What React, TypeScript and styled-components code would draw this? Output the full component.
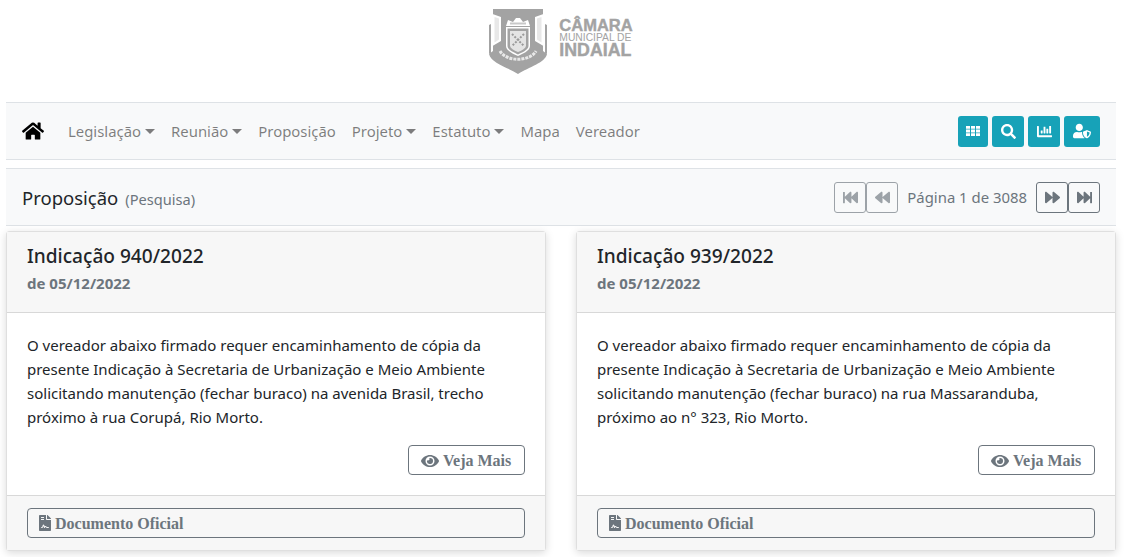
import * as React from 'react';
import styled, { createGlobalStyle } from 'styled-components';
import {
  FaBackward,
  FaChartBar,
  FaEye,
  FaFastBackward,
  FaFastForward,
  FaFileContract,
  FaForward,
  FaHome,
  FaSearch,
  FaUserShield,
} from 'react-icons/fa';

const GlobalStyle = createGlobalStyle`
  * { box-sizing: border-box; }
  html, body { margin: 0; background: #fff; }
  body {
    font-family: "Noto Sans", "Open Sans", sans-serif;
    font-size: 15px;
    color: #212529;
  }
`;

const Page = styled.div`
  width: 1124px;
  height: 557px;
  padding: 0 8px 0 6px;
  overflow: hidden;
`;

const Header = styled.header`
  height: 102px;
  padding-top: 9px;
  display: flex;
  justify-content: center;
  align-items: flex-start;
  gap: 12px;
`;

const LogoText = styled.div`
  display: flex;
  flex-direction: column;
  align-items: flex-start;
  padding-top: 10px;
  color: #a3a3a3;
  font-family: "Liberation Sans", sans-serif;
`;

const LogoLine = styled.span<{ $size: number; $bold?: boolean }>`
  font-size: ${({ $size }) => $size}px;
  font-weight: ${({ $bold }) => ($bold ? 700 : 400)};
  line-height: ${({ $size }) => Math.round($size * 0.8)}px;
  margin-bottom: 1.5px;
  white-space: nowrap;
  -webkit-text-stroke: ${({ $bold }) => ($bold ? '0.4px #a3a3a3' : '0')};
`;

const NavBar = styled.nav`
  height: 58px;
  display: flex;
  align-items: center;
  padding: 0 16px;
  background: #f8f9fa;
  border-top: 1px solid #dee2e6;
  border-bottom: 1px solid #dee2e6;
`;

const HomeLink = styled.a`
  display: flex;
  color: #000;
  font-size: 22px;
  margin-right: 16px;
`;

const NavLink = styled.a`
  display: flex;
  align-items: center;
  padding: 0 8px;
  color: rgba(0, 0, 0, 0.5);
  font-size: 14.9px;
  white-space: nowrap;
`;

const Caret = styled.span`
  width: 0;
  height: 0;
  margin-left: 4px;
  border-top: 5px solid rgba(0, 0, 0, 0.5);
  border-left: 5px solid transparent;
  border-right: 5px solid transparent;
`;

const NavActions = styled.div`
  margin-left: auto;
  display: flex;
  gap: 4px;
`;

const ActionButton = styled.button<{ $width: number; $icon: number }>`
  width: ${({ $width }) => $width}px;
  height: 31px;
  padding: 0;
  display: flex;
  align-items: center;
  justify-content: center;
  border: 0;
  border-radius: 3px;
  background: #17a2b8;
  color: #fff;
  font-size: ${({ $icon }) => $icon}px;
`;

const TitleBar = styled.div`
  height: 58px;
  margin-top: 8px;
  display: flex;
  align-items: center;
  padding: 0 16px;
  background: #f8f9fa;
  border-top: 1px solid #dee2e6;
  border-bottom: 1px solid #dee2e6;
`;

const Title = styled.h1`
  margin: 0;
  font-size: 18.5px;
  font-weight: 400;
  color: #212529;
`;

const TitleNote = styled.small`
  margin-left: 7px;
  font-size: 14.6px;
  color: #6c757d;
`;

const Pager = styled.div`
  margin-left: auto;
  display: flex;
  align-items: center;
`;

const PageLabel = styled.span`
  margin: 0 9px;
  font-size: 14.9px;
  color: #6c757d;
`;

const PageButton = styled.button<{ $disabled?: boolean }>`
  width: 32px;
  height: 31px;
  padding: 0;
  display: flex;
  align-items: center;
  justify-content: center;
  background: transparent;
  border: 1px solid #6c757d;
  border-radius: 3px;
  color: #6c757d;
  font-size: 15px;
  opacity: ${({ $disabled }) => ($disabled ? 0.65 : 1)};
`;

const Cards = styled.div`
  margin-top: 5px;
  display: grid;
  grid-template-columns: 540px 540px;
  column-gap: 30px;
`;

const Card = styled.article`
  height: 320px;
  display: flex;
  flex-direction: column;
  border: 1px solid rgba(0, 0, 0, 0.125);
  border-radius: 4px;
  box-shadow: 0 2px 8px rgba(0, 0, 0, 0.15);
  background: #fff;
`;

const CardHead = styled.div`
  height: 81px;
  padding: 11px 20px 0;
  background: #f7f7f7;
  border-bottom: 1px solid rgba(0, 0, 0, 0.125);
`;

const CardTitle = styled.h2`
  margin: 0;
  font-size: 19.1px;
  line-height: 26px;
  font-weight: 500;
  color: #212529;
`;

const CardDate = styled.div`
  margin-top: 3px;
  font-size: 15px;
  line-height: 22px;
  font-weight: 700;
  color: #6c757d;
`;

const CardBody = styled.div`
  flex: 1;
  display: flex;
  flex-direction: column;
  padding: 20px 20px 0;
`;

const CardText = styled.p`
  margin: 0;
  font-size: 15px;
  line-height: 24px;
  height: 112px;
  color: #212529;
`;

const MoreButton = styled.a`
  align-self: flex-end;
  width: 117px;
  height: 30px;
  display: flex;
  align-items: center;
  gap: 4px;
  padding: 2px 0 0 12px;
  border: 1px solid #6c757d;
  border-radius: 4px;
  color: #6c757d;
  font-family: "Liberation Serif", serif;
  font-weight: 700;
  font-size: 16px;

  svg {
    font-size: 18px;
  }
`;

const CardFoot = styled.div`
  height: 55px;
  padding: 12px 20px 0;
  background: #f7f7f7;
  border-top: 1px solid rgba(0, 0, 0, 0.125);
`;

const DocButton = styled.a`
  height: 30px;
  display: flex;
  align-items: center;
  gap: 4px;
  padding: 2px 11px 0;
  border: 1px solid #6c757d;
  border-radius: 4px;
  color: #6c757d;
  font-family: "Liberation Serif", serif;
  font-weight: 700;
  font-size: 16px;

  svg {
    width: 12px;
    height: 16px;
    margin-top: -2px;
  }
`;

const GridIcon = () => (
  <svg width="14" height="10" viewBox="0 0 14 10" fill="currentColor" aria-hidden="true">
    <path d="M0 0H4V2.8H0ZM5 0H9V2.8H5ZM10 0H14V2.8H10ZM0 3.6H4V6.4H0ZM5 3.6H9V6.4H5ZM10 3.6H14V6.4H10ZM0 7.2H4V10H0ZM5 7.2H9V10H5ZM10 7.2H14V10H10Z" />
  </svg>
);

const Crest = () => (
  <svg width="58" height="65" viewBox="0 0 58 65" aria-hidden="true">
    <path fill="#a3a3a3" d="M4 0H54V42L58 45C56 54 40 58 29 65C18 58 2 54 0 45L4 42Z" />
    <path fill="#a3a3a3" d="M0 16L2 15V44L0 45ZM58 16L56 15V44L58 45Z" />
    <path fill="#fff" d="M3.5 5L12 8V32L3.5 37ZM54.5 5L46 8V32L54.5 37Z" />
    <path fill="#a3a3a3" d="M5.5 8L10 9.5V30.5L5.5 33.5ZM52.5 8L48 9.5V30.5L52.5 33.5Z" opacity="0.25" />
    <path fill="#fff" d="M19 11L24 13L27 9H31L34 13L39 11L41 17H17Z" />
    <path fill="#a3a3a3" d="M21 13.5H37V15.5H21Z" opacity="0.6" />
    <path fill="#fff" d="M17 18H41V37C41 42 33 45 29 47C25 45 17 42 17 37Z" />
    <path fill="#a3a3a3" d="M18.5 19.5H39.5V37C39.5 41 32 44 29 45.5C26 44 18.5 41 18.5 37Z" />
    <path fill="#e4e4e4" d="M21 22H37V36.5C37 39.5 32 42 29 43C26 42 21 39.5 21 36.5Z" />
    <path fill="none" stroke="#9a9a9a" strokeWidth="2" strokeDasharray="2 1.5" d="M23 25L35 37M35 25L23 37" />
    <path fill="none" stroke="#e8e8e8" strokeWidth="3" strokeDasharray="3 1" d="M11 42C17 53 41 53 47 42" />
  </svg>
);

type Item = {
  title: string;
  date: string;
  text: string;
};

const items: Item[] = [
  {
    title: 'Indicação 940/2022',
    date: 'de 05/12/2022',
    text: 'O vereador abaixo firmado requer encaminhamento de cópia da presente Indicação à Secretaria de Urbanização e Meio Ambiente solicitando manutenção (fechar buraco) na avenida Brasil, trecho próximo à rua Corupá, Rio Morto.',
  },
  {
    title: 'Indicação 939/2022',
    date: 'de 05/12/2022',
    text: 'O vereador abaixo firmado requer encaminhamento de cópia da presente Indicação à Secretaria de Urbanização e Meio Ambiente solicitando manutenção (fechar buraco) na rua Massaranduba, próximo ao n° 323, Rio Morto.',
  },
];

const App = () => (
  <Page>
    <GlobalStyle />
    <Header>
      <Crest />
      <LogoText>
        <LogoLine $size={16.5} $bold>CÂMARA</LogoLine>
        <LogoLine $size={10.3}>MUNICIPAL DE</LogoLine>
        <LogoLine $size={17.8} $bold>INDAIAL</LogoLine>
      </LogoText>
    </Header>

    <NavBar>
      <HomeLink><FaHome /></HomeLink>
      <NavLink>Legislação<Caret /></NavLink>
      <NavLink>Reunião<Caret /></NavLink>
      <NavLink>Proposição</NavLink>
      <NavLink>Projeto<Caret /></NavLink>
      <NavLink>Estatuto<Caret /></NavLink>
      <NavLink>Mapa</NavLink>
      <NavLink>Vereador</NavLink>
      <NavActions>
        <ActionButton $width={30} $icon={14}><GridIcon /></ActionButton>
        <ActionButton $width={32} $icon={15}><FaSearch /></ActionButton>
        <ActionButton $width={32} $icon={15}><FaChartBar /></ActionButton>
        <ActionButton $width={36} $icon={18}><FaUserShield /></ActionButton>
      </NavActions>
    </NavBar>

    <TitleBar>
      <Title>Proposição<TitleNote>(Pesquisa)</TitleNote></Title>
      <Pager>
        <PageButton $disabled><FaFastBackward /></PageButton>
        <PageButton $disabled><FaBackward /></PageButton>
        <PageLabel>Página 1 de 3088</PageLabel>
        <PageButton><FaForward /></PageButton>
        <PageButton><FaFastForward /></PageButton>
      </Pager>
    </TitleBar>

    <Cards>
      {items.map(({ title, date, text }) => (
        <Card key={title}>
          <CardHead>
            <CardTitle>{title}</CardTitle>
            <CardDate>{date}</CardDate>
          </CardHead>
          <CardBody>
            <CardText>{text}</CardText>
            <MoreButton><FaEye />Veja Mais</MoreButton>
          </CardBody>
          <CardFoot>
            <DocButton><FaFileContract />Documento Oficial</DocButton>
          </CardFoot>
        </Card>
      ))}
    </Cards>
  </Page>
);

export default App;
